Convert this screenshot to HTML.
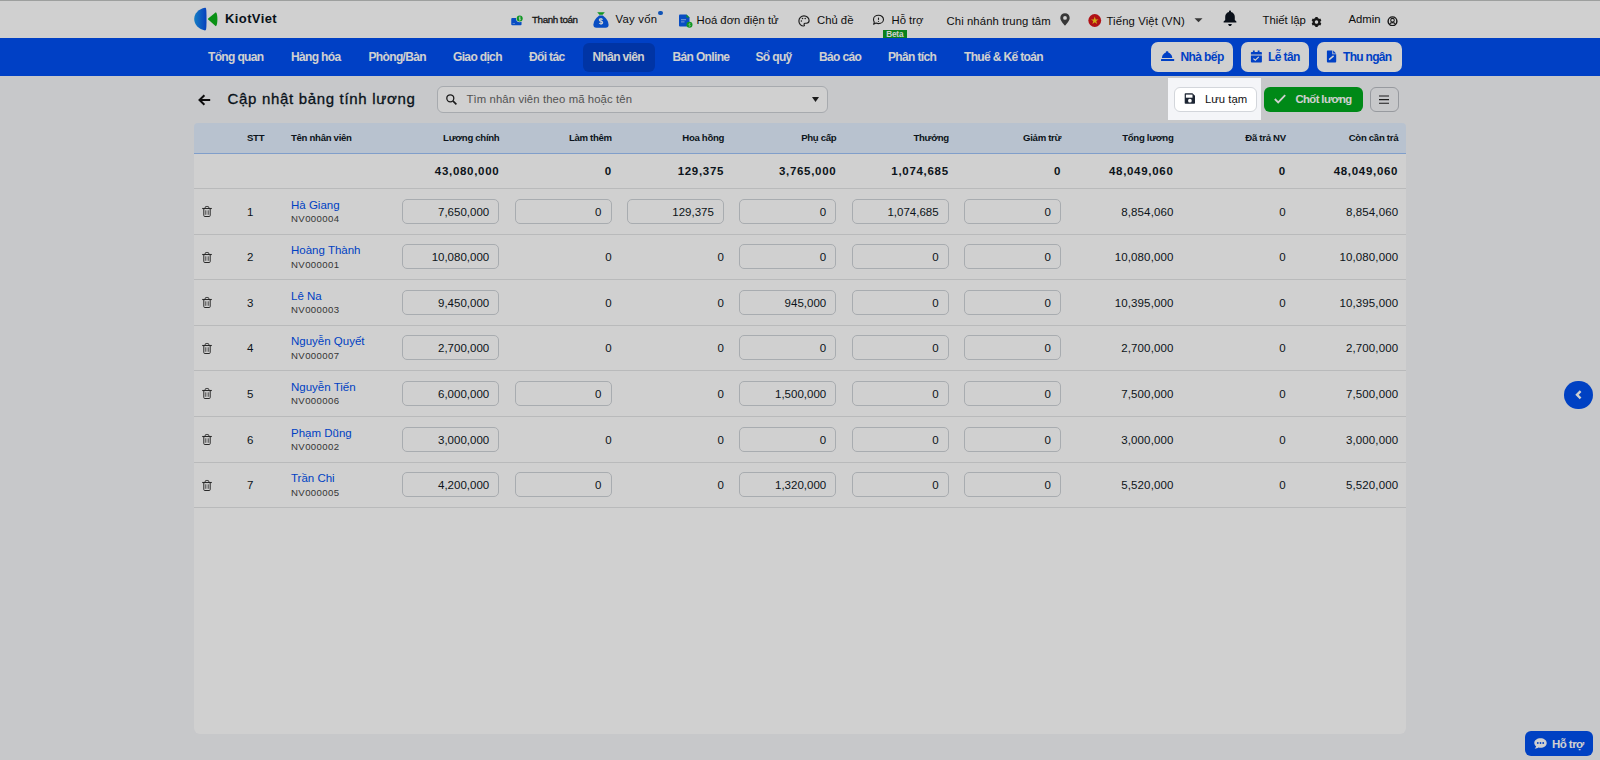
<!DOCTYPE html>
<html><head><meta charset="utf-8">
<style>
*{box-sizing:border-box;margin:0;padding:0}
html,body{width:1600px;height:760px;overflow:hidden}
body{background:#f4f5f8;font-family:"Liberation Sans",sans-serif;color:#0f1824;position:relative}
.abs{position:absolute}
.t{position:absolute;white-space:nowrap;line-height:1}
svg{display:block}
#top{position:absolute;left:0;top:0;width:1600px;height:38px;background:#fff;border-top:1px solid #c1c3c2}
#nav{position:absolute;left:0;top:38px;width:1600px;height:38px;background:#004ff2}
.ni{position:absolute;top:13.3px;color:#fff;font-weight:bold;font-size:12px;line-height:1;white-space:nowrap;letter-spacing:-0.65px}
#act{position:absolute;left:583px;top:5px;width:72px;height:29px;background:#0040cb;border-radius:6px}
.nb{position:absolute;top:4px;height:30px;background:#fff;border-radius:7px}
.nbt{position:absolute;top:12.5px;color:#004ff2;font-weight:bold;font-size:12px;line-height:1;white-space:nowrap;letter-spacing:-0.3px}
.hi{position:absolute;font-size:11.3px;line-height:1;white-space:nowrap;color:#111}
#card{position:absolute;left:194px;top:123px;width:1212px;height:611px;background:#fff;border-radius:6px}
#thead{position:absolute;left:194px;top:123px;width:1212px;height:31px;background:#e2eefe;border-radius:4px 4px 0 0;border-bottom:1px solid #9dc2f8}
.th{position:absolute;top:133.4px;letter-spacing:-0.3px;font-weight:bold;font-size:9.6px;line-height:1;white-space:nowrap;color:#0f1824}
.r{text-align:right}
.tot{position:absolute;top:165.7px;font-weight:bold;font-size:11.5px;line-height:1;white-space:nowrap;letter-spacing:0.7px;color:#0f1824}
.rl{position:absolute;left:194px;width:1212px;height:1px;background:#e3e4e6}
.stt,.cell{position:absolute;font-size:11.5px;line-height:1;white-space:nowrap;letter-spacing:0.12px;color:#0f1824}
.nm{position:absolute;font-size:11.5px;line-height:1;white-space:nowrap;color:#0050f0}
.cd{position:absolute;font-size:9.6px;line-height:1;white-space:nowrap;color:#444;letter-spacing:0.4px}
.inp{position:absolute;width:97px;height:25px;border:1px solid #cfd3d8;border-radius:5px;background:#fff}
.inp span{position:absolute;right:9px;top:7.2px;font-size:11.5px;line-height:1;white-space:nowrap;letter-spacing:0px;color:#0f1824}
#ovl{position:absolute;left:1168px;top:78px;width:93px;height:42px;box-shadow:0 0 0 3000px rgba(0,0,0,0.184);pointer-events:none;z-index:50}
</style></head><body>
<div id="top">
  <!-- logo -->
  <svg class="abs" style="left:194px;top:6px" width="25" height="24" viewBox="0 0 25 24">
    <defs><linearGradient id="lg" x1="0" y1="0" x2="1" y2="0"><stop offset="0" stop-color="#1a9af0"/><stop offset="1" stop-color="#0a4fe8"/></linearGradient></defs>
    <path d="M11 0.8 C4.8 1.8 0.2 6.4 0.2 12.1 C0.2 17.8 4.8 22.4 11 23.4 C12.2 23.4 12.5 22.6 12.5 12.1 C12.5 1.6 12.2 0.8 11 0.8Z" fill="url(#lg)"/>
    <path d="M21.8 5.2 L14.2 11.4 Q13.6 12 14.2 12.6 L21.8 19.3 C23.9 18.6 24 6 21.8 5.2Z" fill="#0db21a"/>
  </svg>
  <div class="t" style="left:225px;top:10.5px;font-size:13px;font-weight:bold;color:#0b1523;letter-spacing:0.4px">KiotViet</div>
  <!-- thanh toan icon -->
  <svg class="abs" style="left:511px;top:14px" width="12" height="11" viewBox="0 0 12 11">
    <rect x="0.25" y="2.9" width="10.3" height="7.4" rx="1" fill="#0a5ff0"/>
    <rect x="1.6" y="8.2" width="2.4" height="0.8" fill="#7fb0ff"/>
    <circle cx="8.7" cy="3.5" r="3.7" fill="#fff"/>
    <circle cx="8.7" cy="3.5" r="3" fill="#12b92b"/>
    <path d="M9.5 2.2 Q8 2 8 3 Q8 3.6 8.8 3.6 Q9.6 3.7 9.6 4.3 Q9.6 5.1 8 4.9 M8.8 1.5V5.5" fill="none" stroke="#fff" stroke-width="0.65"/>
  </svg>
  <div class="t" style="left:532px;top:14.2px;font-size:9.8px;color:#1a1a1a;letter-spacing:-0.4px;-webkit-text-stroke:0.3px #1a1a1a">Thanh toán</div>
  <!-- money bag -->
  <svg class="abs" style="left:592.5px;top:10.6px" width="16" height="16" viewBox="0 0 16 16">
    <path d="M4.2 0.3 H11.8 L9.6 2.8 H6.4Z" fill="#16b82a"/>
    <path d="M6.2 3.6 H9.8 Q15.6 8 15.6 12.8 Q15.6 15.7 12.6 15.7 H3.4 Q0.4 15.7 0.4 12.8 Q0.4 8 6.2 3.6Z" fill="#0a5ff0"/>
    <path d="M9.6 7.6 Q9 6.7 7.9 6.7 Q6.4 6.7 6.4 7.9 Q6.4 9 8 9.2 Q9.7 9.4 9.7 10.6 Q9.7 11.9 8 11.9 Q6.8 11.9 6.2 11 M8 5.9V12.8" fill="none" stroke="#fff" stroke-width="1.1"/>
  </svg>
  <div class="t" style="left:615.5px;top:13.2px;font-size:11.3px;color:#111;letter-spacing:0.25px">Vay vốn</div>
  <div class="abs" style="left:658.3px;top:9.8px;width:4.6px;height:4.6px;border-radius:50%;background:#1466e0"></div>
  <!-- invoice icon -->
  <svg class="abs" style="left:678.5px;top:13.2px" width="14" height="14" viewBox="0 0 14 14">
    <path d="M1 0.5 H7.5 L10.5 3.5 V11.5 Q10.5 12.5 9.5 12.5 H1 Q0 12.5 0 11.5 V1.5 Q0 0.5 1 0.5Z" fill="#0a5ff0"/>
    <path d="M7.5 0.5 L10.5 3.5 H7.5Z" fill="#16b82a"/>
    <rect x="2" y="5.2" width="5" height="1" fill="#9cc2ff"/><rect x="2" y="7.4" width="3.5" height="1" fill="#9cc2ff"/>
    <circle cx="10.5" cy="10.8" r="3" fill="#16b82a"/>
    <path d="M11.4 9.7 Q10 9.4 10 10.4 Q10.1 11 10.8 11.1 Q11.4 11.3 11.3 11.8 Q11.1 12.4 9.8 12" fill="none" stroke="#fff" stroke-width="0.6"/>
  </svg>
  <div class="t" style="left:696.5px;top:13.5px;font-size:11.3px;color:#111">Hoá đơn điện tử</div>
  <!-- palette -->
  <svg class="abs" style="left:798px;top:14px" width="12" height="12" viewBox="0 0 12 12">
    <path d="M6 0.9 C3.1 0.9 0.9 3.1 0.9 5.9 C0.9 8.8 3.1 11 5.6 11 C6.5 11 6.6 10.3 6.2 9.7 C5.8 9.1 6.2 8.2 7 8.2 H8.4 C9.9 8.2 11.1 7.1 11.1 5.6 C11.1 3 8.8 0.9 6 0.9Z" fill="none" stroke="#222" stroke-width="1.15"/>
    <circle cx="3.4" cy="5.9" r="0.75" fill="#222"/><circle cx="4.5" cy="3.5" r="0.75" fill="#222"/><circle cx="7.2" cy="3.4" r="0.75" fill="#222"/>
  </svg>
  <div class="t" style="left:817px;top:13.5px;font-size:11.3px;color:#111">Chủ đề</div>
  <!-- chat -->
  <svg class="abs" style="left:872px;top:13.4px" width="13" height="12" viewBox="0 0 13 12">
    <path d="M6.5 1.3 C9.3 1.3 11.5 3.2 11.5 5.5 C11.5 7.8 9.3 9.6 6.5 9.6 C5.6 9.6 4.7 9.4 4 9.1 L1.6 10.3 L2.3 8.1 C1.8 7.4 1.5 6.5 1.5 5.5 C1.5 3.2 3.7 1.3 6.5 1.3Z" fill="none" stroke="#222" stroke-width="1.1" stroke-linejoin="round"/>
    <path d="M6.5 3.6V5.9" stroke="#222" stroke-width="1.1"/><circle cx="6.5" cy="7.3" r="0.6" fill="#222"/>
  </svg>
  <div class="t" style="left:891.5px;top:13.5px;font-size:11.3px;color:#111">Hỗ trợ</div>
  <div class="abs" style="left:883px;top:29px;width:23.5px;height:9px;background:#0e9f23;color:#fff;font-size:8.2px;font-weight:bold;line-height:9.6px;text-align:center;overflow:hidden;letter-spacing:-0.15px">Beta</div>
  <div class="t" style="left:946.5px;top:14.6px;font-size:11.3px;letter-spacing:0.1px;color:#111">Chi nhánh trung tâm</div>
  <!-- pin -->
  <svg class="abs" style="left:1059.5px;top:11.6px" width="10" height="13" viewBox="0 0 10 13">
    <path d="M5 0.3 C2.3 0.3 0.3 2.3 0.3 4.9 C0.3 8 5 12.6 5 12.6 C5 12.6 9.7 8 9.7 4.9 C9.7 2.3 7.7 0.3 5 0.3Z M5 3 A1.9 1.9 0 1 1 5 6.8 A1.9 1.9 0 1 1 5 3Z" fill="#444" fill-rule="evenodd"/>
  </svg>
  <!-- flag -->
  <svg class="abs" style="left:1088px;top:13.2px" width="13.5" height="13" viewBox="0 0 13.5 13">
    <circle cx="6.75" cy="6.5" r="6.4" fill="#d9161c"/>
    <path d="M6.75 2.6 L7.7 5.4 H10.6 L8.2 7.1 L9.1 9.9 L6.75 8.2 L4.4 9.9 L5.3 7.1 L2.9 5.4 H5.8Z" fill="#ffd51c"/>
  </svg>
  <div class="t" style="left:1106.5px;top:14.6px;font-size:11.3px;color:#111;letter-spacing:0.12px">Tiếng Việt (VN)</div>
  <svg class="abs" style="left:1194px;top:16.8px" width="9" height="5" viewBox="0 0 9 5"><path d="M0.5 0.2 H8.5 L4.5 4.2Z" fill="#444"/></svg>
  <!-- bell -->
  <svg class="abs" style="left:1223px;top:8.8px" width="14" height="16.5" viewBox="0 0 14 16.5">
    <path d="M7 0.6 C6.4 0.6 6 1 6 1.6 V2 C3.8 2.5 2.2 4.4 2.2 6.8 V10 L0.6 11.6 V12.6 H13.4 V11.6 L11.8 10 V6.8 C11.8 4.4 10.2 2.5 8 2 V1.6 C8 1 7.6 0.6 7 0.6Z" fill="#0e1620"/>
    <path d="M5.2 14.1 H8.8 C8.8 15.2 8 16.2 7 16.2 C6 16.2 5.2 15.2 5.2 14.1Z" fill="#0e1620"/>
  </svg>
  <div class="t" style="left:1262.5px;top:13.5px;font-size:11.3px;color:#111">Thiết lập</div>
  <!-- gear -->
  <svg class="abs" style="left:1310.5px;top:15.5px" width="11" height="10" viewBox="-5.5 -5 11 10">
    <g fill="#1e1e1e"><rect x="-1.25" y="-5" width="2.5" height="3" rx="0.5" transform="rotate(0)"/><rect x="-1.25" y="-5" width="2.5" height="3" rx="0.5" transform="rotate(60)"/><rect x="-1.25" y="-5" width="2.5" height="3" rx="0.5" transform="rotate(120)"/><rect x="-1.25" y="-5" width="2.5" height="3" rx="0.5" transform="rotate(180)"/><rect x="-1.25" y="-5" width="2.5" height="3" rx="0.5" transform="rotate(240)"/><rect x="-1.25" y="-5" width="2.5" height="3" rx="0.5" transform="rotate(300)"/></g>
    <circle r="2.9" fill="none" stroke="#1e1e1e" stroke-width="2.2"/>
  </svg>
  <div class="t" style="left:1348.5px;top:13.4px;font-size:11.3px;color:#111">Admin</div>
  <!-- user -->
  <svg class="abs" style="left:1387px;top:14.5px" width="11" height="10.5" viewBox="0 0 11 11">
    <circle cx="5.5" cy="5.5" r="4.6" fill="none" stroke="#1e1e1e" stroke-width="1.5"/>
    <circle cx="5.5" cy="4.4" r="1.9" fill="none" stroke="#1e1e1e" stroke-width="1.1"/>
    <path d="M2.3 8.8 C3 7.3 4.1 6.9 5.5 6.9 C6.9 6.9 8 7.3 8.7 8.8" fill="none" stroke="#1e1e1e" stroke-width="1.2"/>
  </svg>
</div>
<div id="nav">
  <div id="act"></div>
  <div class="ni" style="left:208px">Tổng quan</div>
  <div class="ni" style="left:291px">Hàng hóa</div>
  <div class="ni" style="left:368.5px">Phòng/Bàn</div>
  <div class="ni" style="left:453px">Giao dịch</div>
  <div class="ni" style="left:529px">Đối tác</div>
  <div class="ni" style="left:592.5px">Nhân viên</div>
  <div class="ni" style="left:672.5px">Bán Online</div>
  <div class="ni" style="left:755.5px">Sổ quỹ</div>
  <div class="ni" style="left:819px">Báo cáo</div>
  <div class="ni" style="left:888px">Phân tích</div>
  <div class="ni" style="left:964px">Thuế &amp; Kế toán</div>
  <div class="nb" style="left:1151px;width:82px"></div>
  <div class="nb" style="left:1241px;width:68px"></div>
  <div class="nb" style="left:1317px;width:85px"></div>
  <svg class="abs" style="left:1160px;top:12px" width="15" height="12" viewBox="0 0 15 12">
    <rect x="5.9" y="1.2" width="2.4" height="2" rx="0.6" fill="#004ff2"/>
    <path d="M1.9 8 C2.2 4.6 4.6 2.6 7.1 2.6 C9.6 2.6 12 4.6 12.3 8Z" fill="#004ff2"/>
    <rect x="1" y="9" width="13.2" height="2.1" rx="0.5" fill="#004ff2"/>
  </svg>
  <svg class="abs" style="left:1250px;top:11.5px" width="13" height="13" viewBox="0 0 13 13">
    <rect x="2.9" y="0.5" width="1.8" height="2" fill="#004ff2"/><rect x="7.7" y="0.5" width="1.8" height="2" fill="#004ff2"/>
    <path d="M1.8 1.9 H11.1 Q11.9 1.9 11.9 2.7 V4.6 H0.9 V2.7 Q0.9 1.9 1.8 1.9Z" fill="#004ff2"/>
    <path d="M0.9 5.4 H11.9 V11.6 Q11.9 12.5 11 12.5 H1.8 Q0.9 12.5 0.9 11.6Z" fill="#004ff2"/>
    <path d="M3.4 8.6 L5.3 10.3 L8.8 6.9" fill="none" stroke="#fff" stroke-width="1.2"/>
  </svg>
  <svg class="abs" style="left:1326px;top:11.5px" width="12" height="13" viewBox="0 0 12 13">
    <path d="M1.6 0.5 H6.3 V4.3 H10.2 V11.6 Q10.2 12.5 9.3 12.5 H1.8 Q0.9 12.5 0.9 11.6 V1.3 Q0.9 0.5 1.6 0.5Z" fill="#004ff2"/>
    <path d="M7.2 0.6 L10.1 3.5 H7.2Z" fill="#004ff2"/>
    <path d="M3.1 9.6 L7.6 5.9" stroke="#fff" stroke-width="1.5"/>
  </svg>
  <div class="nbt" style="left:1180.5px;letter-spacing:-0.6px">Nhà bếp</div>
  <div class="nbt" style="left:1268px;letter-spacing:-0.6px">Lễ tân</div>
  <div class="nbt" style="left:1343px;letter-spacing:-0.7px">Thu ngân</div>
</div>
<!-- toolbar -->
<svg class="abs" style="left:198px;top:93.5px" width="13" height="12" viewBox="0 0 13 12"><path d="M12.2 6 H1.8 M6.4 1.2 L1.5 6 L6.4 10.8" fill="none" stroke="#111" stroke-width="2"/></svg>
<div class="t" style="left:227.5px;top:91.2px;font-size:15px;color:#0b1523;letter-spacing:0.68px;-webkit-text-stroke:0.3px #0b1523">Cập nhật bảng tính lương</div>
<div class="abs" style="left:437px;top:86px;width:391px;height:26.5px;background:#fff;border:1px solid #cdd1d6;border-radius:6px"></div>
<svg class="abs" style="left:445.5px;top:94px" width="11" height="11" viewBox="0 0 11 11"><circle cx="4.3" cy="4.3" r="3.5" fill="none" stroke="#222" stroke-width="1.3"/><path d="M6.9 6.9 L10.4 10.4" stroke="#222" stroke-width="1.6"/></svg>
<div class="t" style="left:466.5px;top:94px;font-size:11.3px;color:#666;letter-spacing:0.12px">Tìm nhân viên theo mã hoặc tên</div>
<svg class="abs" style="left:812px;top:97px" width="7" height="5" viewBox="0 0 7 5"><path d="M0 0 H7 L3.5 5Z" fill="#222"/></svg>
<div class="abs" style="left:1174px;top:87px;width:83px;height:24.5px;background:#fff;border:1px solid #d3d6db;border-radius:6px"></div>
<svg class="abs" style="left:1184px;top:93px" width="11.5" height="11" viewBox="0 0 11.5 11"><path d="M0.7 1 Q0.7 0.2 1.5 0.2 H8.4 L11 2.8 V9.9 Q11 10.7 10.2 10.7 H1.5 Q0.7 10.7 0.7 9.9Z" fill="#1d2533"/><rect x="1.9" y="1.6" width="6.6" height="3.1" fill="#fff"/><circle cx="5.9" cy="7.7" r="1.85" fill="#fff"/></svg>
<div class="t" style="left:1205px;top:94px;font-size:11.3px;color:#111">Lưu tạm</div>
<div class="abs" style="left:1264px;top:87px;width:99px;height:24.5px;background:#00a91d;border-radius:6px"></div>
<svg class="abs" style="left:1274px;top:93.5px" width="12" height="10" viewBox="0 0 12 10"><path d="M0.8 5 L4.2 8.4 L11.2 1.2" fill="none" stroke="#fff" stroke-width="1.8"/></svg>
<div class="t" style="left:1295.5px;top:94px;font-size:11.3px;font-weight:bold;color:#fff;letter-spacing:-0.6px">Chốt lương</div>
<div class="abs" style="left:1369.5px;top:87px;width:29px;height:24.5px;background:transparent;border:1px solid #b9bdc3;border-radius:6px"></div>
<svg class="abs" style="left:1379px;top:95px" width="10" height="9" viewBox="0 0 10 9"><path d="M0 1 H10 M0 4.6 H10 M0 8.2 H10" stroke="#222" stroke-width="1.15"/></svg>
<!-- floating -->
<div class="abs" style="left:1564px;top:380.5px;width:28.5px;height:28.5px;border-radius:50%;background:#0050f0"></div>
<svg class="abs" style="left:1574px;top:390px" width="9" height="10" viewBox="0 0 9 10"><path d="M6.6 1.2 L3 4.8 L6.6 8.4" fill="none" stroke="#fff" stroke-width="2.4"/></svg>
<div class="abs" style="left:1525px;top:731px;width:68px;height:25px;border-radius:6px;background:#0050f0"></div>
<svg class="abs" style="left:1534px;top:738px" width="13" height="11" viewBox="0 0 13 11"><path d="M6.5 0.3 C3 0.3 0.3 2.4 0.3 5 C0.3 6.3 1 7.5 2.1 8.3 C2 9.3 1.3 10.1 0.6 10.7 C2.3 10.7 3.6 10.2 4.4 9.5 C5.1 9.7 5.8 9.8 6.5 9.8 C10 9.8 12.7 7.7 12.7 5 C12.7 2.4 10 0.3 6.5 0.3Z" fill="#fff"/><circle cx="3.8" cy="5" r="0.9" fill="#0050f0"/><circle cx="6.5" cy="5" r="0.9" fill="#0050f0"/><circle cx="9.2" cy="5" r="0.9" fill="#0050f0"/></svg>
<div class="t" style="left:1552px;top:738.5px;font-size:11.5px;font-weight:bold;color:#fff;letter-spacing:-0.55px">Hỗ trợ</div>
<div id="card"></div>
<div id="thead"></div>
<div class="th" style="left:247px">STT</div>
<div class="th" style="left:291px">Tên nhân viên</div>
<div class="th r" style="right:1100.6px">Lương chính</div>
<div class="th r" style="right:988.2px">Làm thêm</div>
<div class="th r" style="right:875.9px">Hoa hồng</div>
<div class="th r" style="right:763.6px">Phụ cấp</div>
<div class="th r" style="right:651.2px">Thưởng</div>
<div class="th r" style="right:538.8px">Giảm trừ</div>
<div class="th r" style="right:426.5px">Tổng lương</div>
<div class="th r" style="right:314.2px">Đã trả NV</div>
<div class="th r" style="right:201.8px">Còn cần trả</div>
<div class="tot r" style="right:1100.6px">43,080,000</div>
<div class="tot r" style="right:988.2px">0</div>
<div class="tot r" style="right:875.9px">129,375</div>
<div class="tot r" style="right:763.6px">3,765,000</div>
<div class="tot r" style="right:651.2px">1,074,685</div>
<div class="tot r" style="right:538.8px">0</div>
<div class="tot r" style="right:426.5px">48,049,060</div>
<div class="tot r" style="right:314.2px">0</div>
<div class="tot r" style="right:201.8px">48,049,060</div>
<div class="rl" style="top:188px"></div>
<div class="rl" style="top:234.0px"></div>
<div class="abs" style="left:201px;top:205.3px"><svg width="12" height="13" viewBox="0 0 12 13"><path d="M4.2 3.1 V2.5 Q4.2 1.5 5.2 1.5 H6.8 Q7.8 1.5 7.8 2.5 V3.1" fill="none" stroke="#333" stroke-width="0.95"/><path d="M1.2 3.5 H10.8" stroke="#333" stroke-width="1.1"/><path d="M2.8 3.7 V10.6 Q2.8 11.5 3.7 11.5 H8.3 Q9.2 11.5 9.2 10.6 V3.7" fill="none" stroke="#333" stroke-width="1"/><path d="M4.8 5.3 V9.8 M7.2 5.3 V9.8" stroke="#333" stroke-width="0.85"/></svg></div>
<div class="stt" style="left:247px;top:206.7px">1</div>
<div class="nm" style="left:291px;top:199.6px">Hà Giang</div>
<div class="cd" style="left:291px;top:214.3px">NV000004</div>
<div class="inp" style="left:402.2px;top:198.5px"><span>7,650,000</span></div>
<div class="inp" style="left:514.5px;top:198.5px"><span>0</span></div>
<div class="inp" style="left:626.9px;top:198.5px"><span>129,375</span></div>
<div class="inp" style="left:739.2px;top:198.5px"><span>0</span></div>
<div class="inp" style="left:851.6px;top:198.5px"><span>1,074,685</span></div>
<div class="inp" style="left:964.0px;top:198.5px"><span>0</span></div>
<div class="cell r" style="right:426.5px;top:206.9px">8,854,060</div>
<div class="cell r" style="right:314.2px;top:206.9px">0</div>
<div class="cell r" style="right:201.8px;top:206.9px">8,854,060</div>
<div class="rl" style="top:279.0px"></div>
<div class="abs" style="left:201px;top:251.3px"><svg width="12" height="13" viewBox="0 0 12 13"><path d="M4.2 3.1 V2.5 Q4.2 1.5 5.2 1.5 H6.8 Q7.8 1.5 7.8 2.5 V3.1" fill="none" stroke="#333" stroke-width="0.95"/><path d="M1.2 3.5 H10.8" stroke="#333" stroke-width="1.1"/><path d="M2.8 3.7 V10.6 Q2.8 11.5 3.7 11.5 H8.3 Q9.2 11.5 9.2 10.6 V3.7" fill="none" stroke="#333" stroke-width="1"/><path d="M4.8 5.3 V9.8 M7.2 5.3 V9.8" stroke="#333" stroke-width="0.85"/></svg></div>
<div class="stt" style="left:247px;top:252.2px">2</div>
<div class="nm" style="left:291px;top:245.1px">Hoàng Thành</div>
<div class="cd" style="left:291px;top:259.8px">NV000001</div>
<div class="inp" style="left:402.2px;top:244.0px"><span>10,080,000</span></div>
<div class="cell r" style="right:988.2px;top:252.4px">0</div>
<div class="cell r" style="right:875.9px;top:252.4px">0</div>
<div class="inp" style="left:739.2px;top:244.0px"><span>0</span></div>
<div class="inp" style="left:851.6px;top:244.0px"><span>0</span></div>
<div class="inp" style="left:964.0px;top:244.0px"><span>0</span></div>
<div class="cell r" style="right:426.5px;top:252.4px">10,080,000</div>
<div class="cell r" style="right:314.2px;top:252.4px">0</div>
<div class="cell r" style="right:201.8px;top:252.4px">10,080,000</div>
<div class="rl" style="top:325.0px"></div>
<div class="abs" style="left:201px;top:296.3px"><svg width="12" height="13" viewBox="0 0 12 13"><path d="M4.2 3.1 V2.5 Q4.2 1.5 5.2 1.5 H6.8 Q7.8 1.5 7.8 2.5 V3.1" fill="none" stroke="#333" stroke-width="0.95"/><path d="M1.2 3.5 H10.8" stroke="#333" stroke-width="1.1"/><path d="M2.8 3.7 V10.6 Q2.8 11.5 3.7 11.5 H8.3 Q9.2 11.5 9.2 10.6 V3.7" fill="none" stroke="#333" stroke-width="1"/><path d="M4.8 5.3 V9.8 M7.2 5.3 V9.8" stroke="#333" stroke-width="0.85"/></svg></div>
<div class="stt" style="left:247px;top:297.7px">3</div>
<div class="nm" style="left:291px;top:290.6px">Lê Na</div>
<div class="cd" style="left:291px;top:305.3px">NV000003</div>
<div class="inp" style="left:402.2px;top:289.5px"><span>9,450,000</span></div>
<div class="cell r" style="right:988.2px;top:297.9px">0</div>
<div class="cell r" style="right:875.9px;top:297.9px">0</div>
<div class="inp" style="left:739.2px;top:289.5px"><span>945,000</span></div>
<div class="inp" style="left:851.6px;top:289.5px"><span>0</span></div>
<div class="inp" style="left:964.0px;top:289.5px"><span>0</span></div>
<div class="cell r" style="right:426.5px;top:297.9px">10,395,000</div>
<div class="cell r" style="right:314.2px;top:297.9px">0</div>
<div class="cell r" style="right:201.8px;top:297.9px">10,395,000</div>
<div class="rl" style="top:370.0px"></div>
<div class="abs" style="left:201px;top:342.3px"><svg width="12" height="13" viewBox="0 0 12 13"><path d="M4.2 3.1 V2.5 Q4.2 1.5 5.2 1.5 H6.8 Q7.8 1.5 7.8 2.5 V3.1" fill="none" stroke="#333" stroke-width="0.95"/><path d="M1.2 3.5 H10.8" stroke="#333" stroke-width="1.1"/><path d="M2.8 3.7 V10.6 Q2.8 11.5 3.7 11.5 H8.3 Q9.2 11.5 9.2 10.6 V3.7" fill="none" stroke="#333" stroke-width="1"/><path d="M4.8 5.3 V9.8 M7.2 5.3 V9.8" stroke="#333" stroke-width="0.85"/></svg></div>
<div class="stt" style="left:247px;top:343.2px">4</div>
<div class="nm" style="left:291px;top:336.1px">Nguyễn Quyết</div>
<div class="cd" style="left:291px;top:350.8px">NV000007</div>
<div class="inp" style="left:402.2px;top:335.0px"><span>2,700,000</span></div>
<div class="cell r" style="right:988.2px;top:343.4px">0</div>
<div class="cell r" style="right:875.9px;top:343.4px">0</div>
<div class="inp" style="left:739.2px;top:335.0px"><span>0</span></div>
<div class="inp" style="left:851.6px;top:335.0px"><span>0</span></div>
<div class="inp" style="left:964.0px;top:335.0px"><span>0</span></div>
<div class="cell r" style="right:426.5px;top:343.4px">2,700,000</div>
<div class="cell r" style="right:314.2px;top:343.4px">0</div>
<div class="cell r" style="right:201.8px;top:343.4px">2,700,000</div>
<div class="rl" style="top:416.0px"></div>
<div class="abs" style="left:201px;top:387.3px"><svg width="12" height="13" viewBox="0 0 12 13"><path d="M4.2 3.1 V2.5 Q4.2 1.5 5.2 1.5 H6.8 Q7.8 1.5 7.8 2.5 V3.1" fill="none" stroke="#333" stroke-width="0.95"/><path d="M1.2 3.5 H10.8" stroke="#333" stroke-width="1.1"/><path d="M2.8 3.7 V10.6 Q2.8 11.5 3.7 11.5 H8.3 Q9.2 11.5 9.2 10.6 V3.7" fill="none" stroke="#333" stroke-width="1"/><path d="M4.8 5.3 V9.8 M7.2 5.3 V9.8" stroke="#333" stroke-width="0.85"/></svg></div>
<div class="stt" style="left:247px;top:388.7px">5</div>
<div class="nm" style="left:291px;top:381.6px">Nguyễn Tiến</div>
<div class="cd" style="left:291px;top:396.3px">NV000006</div>
<div class="inp" style="left:402.2px;top:380.5px"><span>6,000,000</span></div>
<div class="inp" style="left:514.5px;top:380.5px"><span>0</span></div>
<div class="cell r" style="right:875.9px;top:388.9px">0</div>
<div class="inp" style="left:739.2px;top:380.5px"><span>1,500,000</span></div>
<div class="inp" style="left:851.6px;top:380.5px"><span>0</span></div>
<div class="inp" style="left:964.0px;top:380.5px"><span>0</span></div>
<div class="cell r" style="right:426.5px;top:388.9px">7,500,000</div>
<div class="cell r" style="right:314.2px;top:388.9px">0</div>
<div class="cell r" style="right:201.8px;top:388.9px">7,500,000</div>
<div class="rl" style="top:462.0px"></div>
<div class="abs" style="left:201px;top:433.3px"><svg width="12" height="13" viewBox="0 0 12 13"><path d="M4.2 3.1 V2.5 Q4.2 1.5 5.2 1.5 H6.8 Q7.8 1.5 7.8 2.5 V3.1" fill="none" stroke="#333" stroke-width="0.95"/><path d="M1.2 3.5 H10.8" stroke="#333" stroke-width="1.1"/><path d="M2.8 3.7 V10.6 Q2.8 11.5 3.7 11.5 H8.3 Q9.2 11.5 9.2 10.6 V3.7" fill="none" stroke="#333" stroke-width="1"/><path d="M4.8 5.3 V9.8 M7.2 5.3 V9.8" stroke="#333" stroke-width="0.85"/></svg></div>
<div class="stt" style="left:247px;top:434.7px">6</div>
<div class="nm" style="left:291px;top:427.6px">Phạm Dũng</div>
<div class="cd" style="left:291px;top:442.3px">NV000002</div>
<div class="inp" style="left:402.2px;top:426.5px"><span>3,000,000</span></div>
<div class="cell r" style="right:988.2px;top:434.9px">0</div>
<div class="cell r" style="right:875.9px;top:434.9px">0</div>
<div class="inp" style="left:739.2px;top:426.5px"><span>0</span></div>
<div class="inp" style="left:851.6px;top:426.5px"><span>0</span></div>
<div class="inp" style="left:964.0px;top:426.5px"><span>0</span></div>
<div class="cell r" style="right:426.5px;top:434.9px">3,000,000</div>
<div class="cell r" style="right:314.2px;top:434.9px">0</div>
<div class="cell r" style="right:201.8px;top:434.9px">3,000,000</div>
<div class="rl" style="top:507.0px"></div>
<div class="abs" style="left:201px;top:479.3px"><svg width="12" height="13" viewBox="0 0 12 13"><path d="M4.2 3.1 V2.5 Q4.2 1.5 5.2 1.5 H6.8 Q7.8 1.5 7.8 2.5 V3.1" fill="none" stroke="#333" stroke-width="0.95"/><path d="M1.2 3.5 H10.8" stroke="#333" stroke-width="1.1"/><path d="M2.8 3.7 V10.6 Q2.8 11.5 3.7 11.5 H8.3 Q9.2 11.5 9.2 10.6 V3.7" fill="none" stroke="#333" stroke-width="1"/><path d="M4.8 5.3 V9.8 M7.2 5.3 V9.8" stroke="#333" stroke-width="0.85"/></svg></div>
<div class="stt" style="left:247px;top:480.2px">7</div>
<div class="nm" style="left:291px;top:473.1px">Trần Chi</div>
<div class="cd" style="left:291px;top:487.8px">NV000005</div>
<div class="inp" style="left:402.2px;top:472.0px"><span>4,200,000</span></div>
<div class="inp" style="left:514.5px;top:472.0px"><span>0</span></div>
<div class="cell r" style="right:875.9px;top:480.4px">0</div>
<div class="inp" style="left:739.2px;top:472.0px"><span>1,320,000</span></div>
<div class="inp" style="left:851.6px;top:472.0px"><span>0</span></div>
<div class="inp" style="left:964.0px;top:472.0px"><span>0</span></div>
<div class="cell r" style="right:426.5px;top:480.4px">5,520,000</div>
<div class="cell r" style="right:314.2px;top:480.4px">0</div>
<div class="cell r" style="right:201.8px;top:480.4px">5,520,000</div>
<div id="ovl"></div>
</body></html>
